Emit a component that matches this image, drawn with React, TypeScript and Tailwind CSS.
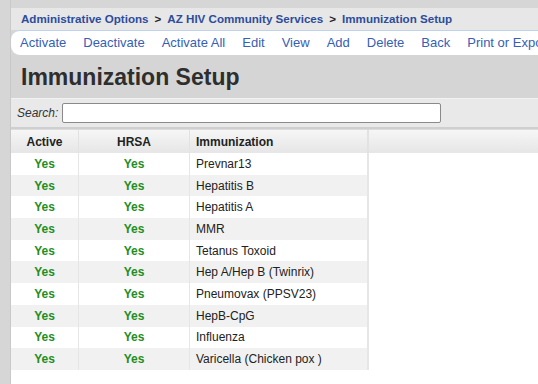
import React from "react";

const actions = ["Activate", "Deactivate", "Activate All", "Edit", "View", "Add", "Delete", "Back", "Print or Export"];

const immunizations = [
  "Prevnar13",
  "Hepatitis B",
  "Hepatitis A",
  "MMR",
  "Tetanus Toxoid",
  "Hep A/Hep B (Twinrix)",
  "Pneumovax (PPSV23)",
  "HepB-CpG",
  "Influenza",
  "Varicella (Chicken pox )",
];

export default function App() {
  return (
    <div className="flex h-[384px] w-[538px] overflow-hidden bg-[#d6d6d6] font-['Liberation_Sans',Arial,sans-serif] text-[#222]">
      <div className="w-[11px] shrink-0 border-r border-[#c9c9c9] bg-[#d6d6d6]" />
      <div className="flex min-w-0 flex-1 flex-col pt-[8px]">
        {/* breadcrumb */}
        <div className="flex h-[22px] shrink-0 items-center whitespace-nowrap bg-[#e7e7e7] pl-[10px] text-[11.6px] font-bold text-[#2c4c9c]">
          <span>Administrative Options</span>
          <span className="mx-[6px] text-[#222]">&gt;</span>
          <span>AZ HIV Community Services</span>
          <span className="mx-[6px] text-[#222]">&gt;</span>
          <span>Immunization Setup</span>
        </div>

        {/* toolbar */}
        <div className="flex h-[25px] shrink-0 items-center gap-[17px] overflow-hidden whitespace-nowrap rounded-l-[9px] border-t border-[#bcd2ee] bg-white pl-[9px] text-[13px] text-[#3560b5]">
          {actions.map((a) => (
            <span key={a}>{a}</span>
          ))}
        </div>

        {/* title */}
        <div className="flex h-[43px] shrink-0 items-center bg-[#d5d5d5] pl-[10px] pt-[1px]">
          <h1 className="text-[23px] font-bold text-[#2e2e2e]">Immunization Setup</h1>
        </div>

        {/* search */}
        <div className="flex h-[31px] shrink-0 items-center border-t border-[#f2f2f2] border-b-2 border-b-[#cfcfcf] bg-[#e9e9e9] pl-[6px]">
          <span className="text-[12px] italic text-[#333]">Search:</span>
          <div className="ml-[4px] h-[20px] w-[379px] rounded-[2px] border border-[#8a8a8a] bg-white" />
        </div>

        {/* table */}
        <div className="flex-1 bg-white text-[12px]">
          <div className="flex h-[24px] border-t border-[#dcdcdc] bg-gradient-to-b from-[#f6f6f6] to-[#e6e6e6] font-bold">
            <div className="flex w-[68px] items-center justify-center border-r border-[#e2e2e2]">Active</div>
            <div className="flex w-[111px] items-center justify-center border-r border-[#e2e2e2]">HRSA</div>
            <div className="flex w-[179px] items-center border-r-2 border-[#e2e2e2] pl-[6px]">Immunization</div>
            <div className="flex-1" />
          </div>
          {immunizations.map((name, i) => (
            <div key={name} className="flex h-[21.7px]">
              <div className={`flex w-[358px] ${i % 2 === 1 ? "bg-[#f1f1f1]" : "bg-white"}`}>
                <div className="flex w-[68px] items-center justify-center border-r border-[#e6e6e6] font-bold text-[#1f8f1f]">Yes</div>
                <div className="flex w-[111px] items-center justify-center border-r border-[#e6e6e6] font-bold text-[#1f8f1f]">Yes</div>
                <div className="flex w-[179px] items-center border-r-2 border-[#e6e6e6] pl-[6px]">{name}</div>
              </div>
            </div>
          ))}
        </div>
      </div>
    </div>
  );
}
